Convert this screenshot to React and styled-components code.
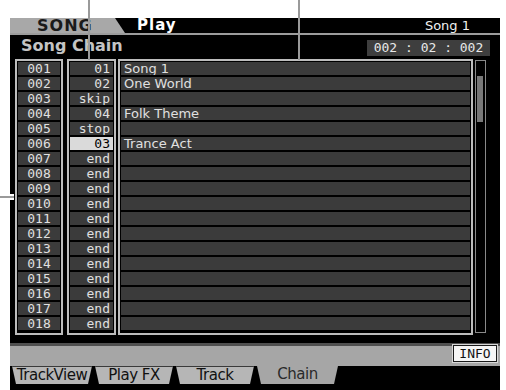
import React from 'react'
import styled, { createGlobalStyle } from 'styled-components'

const Global = createGlobalStyle`
  html, body { margin:0; padding:0; background:#fff; }
  body { width:506px; height:390px; overflow:hidden; font-family:"DejaVu Sans", sans-serif; }
`

const Page = styled.div`
  position:relative;
  width:506px; height:390px;
  padding:18px 6px 0 10px;
  box-sizing:border-box;
`
const Screen = styled.div`
  width:490px; height:372px;
  background:#000;
  display:flex; flex-direction:column;
`
const Header = styled.div`
  height:15px;
  border-bottom:2px solid #9c9c9c;
  display:flex; align-items:stretch;
  flex-shrink:0;
`
const ModeTab = styled.div`
  width:115px;
  background:#a8a8a8;
  clip-path:polygon(0 0, 105px 0, 115px 100%, 0 100%);
  font:bold 16px "DejaVu Sans", sans-serif;
  letter-spacing:1px;
  line-height:15px;
  color:#1a1a1a;
  padding-left:27px;
  box-sizing:border-box;
`
const PageName = styled.div`
  flex:1;
  padding-left:12px;
  font:bold 15px "DejaVu Sans", sans-serif;
  letter-spacing:1px;
  line-height:15px;
  color:#fff;
`
const SongName = styled.div`
  padding-right:30px;
  font:13px "DejaVu Sans", sans-serif;
  line-height:15px;
  color:#f0f0f0;
`
const TitleRow = styled.div`
  height:24px;
  display:flex; align-items:flex-start; justify-content:space-between;
  flex-shrink:0;
`
const Title = styled.div`
  padding:3px 0 0 11px;
  font:bold 16px "DejaVu Sans", sans-serif;
  line-height:15px;
  color:#c4c4c4;
`
const TimeBox = styled.div`
  margin:5px 10px 0 0;
  width:123px; height:16px;
  background:#3e3e3e;
  font:13px "DejaVu Sans Mono", monospace;
  line-height:16px;
  color:#e8e8e8;
  text-align:center;
`
const List = styled.div`
  height:276px;
  padding-left:5px;
  display:flex; align-items:flex-start;
  flex-shrink:0;
`
const Column = styled.div`
  width:${p => p.$w}px;
  margin-right:${p => p.$gap}px;
  border:2px solid #bdbdbd;
  padding:1px;
  box-sizing:border-box;
  background:#000;
  display:flex; flex-direction:column;
`
const Cell = styled.div`
  height:13px;
  margin-bottom:2px;
  padding:0 ${p => p.$pad}px;
  background:${p => (p.$hl ? '#dadada' : '#3b3b3b')};
  color:${p => (p.$hl ? '#000' : '#e0e0e0')};
  font:${p => (p.$mono ? '13px "DejaVu Sans Mono", monospace' : '13px "DejaVu Sans", sans-serif')};
  line-height:13px;
  text-align:${p => p.$align};
  white-space:nowrap;
  overflow:hidden;
`
const Scroll = styled.div`
  margin-top:1px;
  width:11px; height:273px;
  border:1px solid #8a8a8a;
  box-sizing:border-box;
  padding:15px 0 0 1px;
`
const Thumb = styled.div`
  width:6px; height:46px;
  background:#787878;
`
const Spacer = styled.div`
  height:8px;
  flex-shrink:0;
`
const InfoBar = styled.div`
  height:20px;
  border-top:3px solid #505050;
  background:#a6a6a6;
  display:flex; justify-content:flex-end; align-items:flex-start;
  flex-shrink:0;
`
const InfoButton = styled.div`
  margin:-1px 3px 0 0;
  width:44px; height:17px;
  box-sizing:border-box;
  background:#f6f6f6;
  border:1px solid #1a1a1a;
  box-shadow:0 0 0 1px #d8d8d8;
  font:13px "DejaVu Sans Mono", monospace;
  line-height:15px;
  color:#111;
  text-align:center;
`
const Tabs = styled.div`
  height:18px;
  padding-left:2px;
  display:flex; gap:3px;
  flex-shrink:0;
`
const Tab = styled.div`
  width:${p => p.$w}px;
  box-sizing:border-box;
  background:${p => (p.$active ? '#a6a6a6' : '#b6b6b6')};
  border-top:${p => (p.$active ? 'none' : '1px solid #3a3a3a')};
  clip-path:polygon(0 0, 100% 0, calc(100% - 4px) 100%, 4px 100%);
  font:15px "DejaVu Sans", sans-serif;
  letter-spacing:-0.5px;
  line-height:17px;
  color:${p => (p.$active ? '#2a2a2a' : '#111')};
  text-align:center;
  white-space:nowrap;
`
const Callout = styled.div`
  position:absolute;
  left:${p => p.$x}px; top:${p => p.$y}px;
  width:${p => p.$w}px; height:${p => p.$h}px;
  background:#9a9a9a;
`
const CalloutH = styled(Callout)`
  border-top:2px solid #fff;
  border-bottom:2px solid #fff;
  box-sizing:content-box;
`

const steps = ['01', '02', 'skip', '04', 'stop', '03', ...Array(12).fill('end')]
const songs = ['Song 1', 'One World', '', 'Folk Theme', '', 'Trance Act', ...Array(12).fill('')]
const nums = steps.map((_, i) => String(i + 1).padStart(3, '0'))

export default function App() {
  return (
    <Page>
      <Global />
      <Screen>
        <Header>
          <ModeTab>SONG</ModeTab>
          <PageName>Play</PageName>
          <SongName>Song 1</SongName>
        </Header>
        <TitleRow>
          <Title>Song Chain</Title>
          <TimeBox>002 : 02 : 002</TimeBox>
        </TitleRow>
        <List>
          <Column $w={48} $gap={4}>
            {nums.map(n => (
              <Cell key={n} $mono $align="center" $pad={0}>{n}</Cell>
            ))}
          </Column>
          <Column $w={49} $gap={2}>
            {steps.map((s, i) => (
              <Cell key={i} $mono $align="right" $pad={3} $hl={i === 5}>{s}</Cell>
            ))}
          </Column>
          <Column $w={355} $gap={2}>
            {songs.map((s, i) => (
              <Cell key={i} $align="left" $pad={3}>{s}</Cell>
            ))}
          </Column>
          <Scroll><Thumb /></Scroll>
        </List>
        <Spacer />
        <InfoBar>
          <InfoButton>INFO</InfoButton>
        </InfoBar>
        <Tabs>
          <Tab $w={80}>TrackView</Tab>
          <Tab $w={78}>Play FX</Tab>
          <Tab $w={78}>Track</Tab>
          <Tab $w={81} $active>Chain</Tab>
        </Tabs>
      </Screen>
      <Callout $x={88} $y={0} $w={2} $h={60} />
      <Callout $x={298} $y={0} $w={2} $h={60} />
      <CalloutH $x={0} $y={194} $w={14} $h={2} />
    </Page>
  )
}
